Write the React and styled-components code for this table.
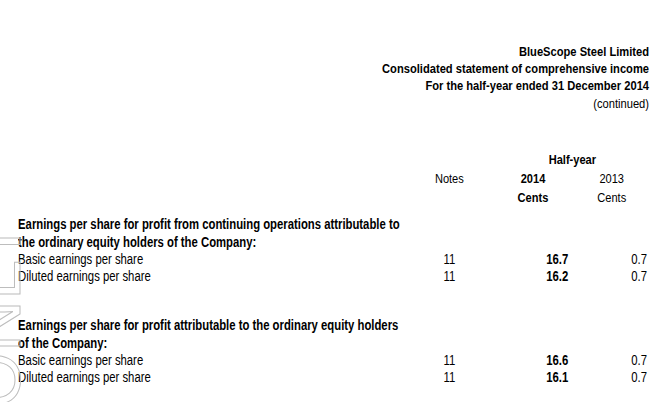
import React from 'react';
import styled, { createGlobalStyle } from 'styled-components';

const GlobalStyle = createGlobalStyle`
html, body {
    margin: 0;
    padding: 0;
    background: #fff;
    overflow: hidden;
}
`;

const Frame = styled.div`
position: relative;
width: 672px;
height: 402px;
overflow: hidden;
`;

// the pdf uses a narrow arial, so the sheet is squeezed horizontally
const Sheet = styled.div`
width: 819.5px;
padding-top: 42.7px;
transform: scaleX(0.82);
transform-origin: 0 0;
font-family: "Liberation Sans", Arial, sans-serif;
color: #000;
`;

const Title = styled.div`
text-align: right;
padding-right: 28px;
font-size: 13.6px;
line-height: 17.3px;
font-weight: ${props => props.$plain ? 400 : 700};
`;

const ColumnHead = styled.div`
margin-top: 37.9px;
font-size: 13.5px;
line-height: 19px;
`;

const Row = styled.div`
display: flex;
padding-left: 22px;
`;

const Label = styled.div`
width: 496px;
font-weight: ${props => props.$bold ? 700 : 400};
`;

const Note = styled.div`
width: 60px;
text-align: center;
`;

const Amount = styled.div`
width: 86px;
margin-left: ${props => props.$gap}px;
text-align: ${props => props.$align || 'right'};
font-weight: ${props => props.$bold ? 700 : 400};
`;

const Span = styled.div`
width: 182px;
margin-left: 29px;
text-align: center;
font-weight: 700;
`;

const Section = styled.div`
margin-top: ${props => props.$top}px;
font-size: 13.8px;
line-height: 17.3px;
`;

const Watermark = styled.svg`
position: absolute;
left: 0;
top: 0;
pointer-events: none;
`;

const sections = [
    {
        top: 9.7,
        heading: ['Earnings per share for profit from continuing operations attributable to', 'the ordinary equity holders of the Company:'],
        rows: [
            { label: 'Basic earnings per share', note: '11', current: '16.7', prior: '0.7' },
            { label: 'Diluted earnings per share', note: '11', current: '16.2', prior: '0.7' },
        ],
    },
    {
        top: 31.8,
        heading: ['Earnings per share for profit attributable to the ordinary equity holders', 'of the Company:'],
        rows: [
            { label: 'Basic earnings per share', note: '11', current: '16.6', prior: '0.7' },
            { label: 'Diluted earnings per share', note: '11', current: '16.1', prior: '0.7' },
        ],
    },
];

function EpsSection({ section }) {
    return (
        <Section $top={section.top}>
            {section.heading.map(line => (
                <Row key={line}><Label $bold>{line}</Label></Row>
            ))}
            {section.rows.map(row => (
                <Row key={row.label}>
                    <Label>{row.label}</Label>
                    <Note>{row.note}</Note>
                    <Amount $gap={29} $bold>{row.current}</Amount>
                    <Amount $gap={10}>{row.prior}</Amount>
                </Row>
            ))}
        </Section>
    );
}

function App() {
    return (
        <Frame>
            <GlobalStyle />
            <Sheet>
                <Title>BlueScope Steel Limited</Title>
                <Title>Consolidated statement of comprehensive income</Title>
                <Title>For the half-year ended 31 December 2014</Title>
                <Title $plain>(continued)</Title>

                <ColumnHead>
                    <Row>
                        <Label />
                        <Note />
                        <Span>Half-year</Span>
                    </Row>
                    <Row>
                        <Label />
                        <Note>Notes</Note>
                        <Amount $gap={29} $align="center" $bold>2014</Amount>
                        <Amount $gap={10} $align="center">2013</Amount>
                    </Row>
                    <Row>
                        <Label />
                        <Note />
                        <Amount $gap={29} $align="center" $bold>Cents</Amount>
                        <Amount $gap={10} $align="center">Cents</Amount>
                    </Row>
                </ColumnHead>

                {sections.map((section, i) => <EpsSection key={i} section={section} />)}
            </Sheet>

            <Watermark width="40" height="402" viewBox="0 0 40 402">
                <text
                    transform="translate(20 408) rotate(-90)"
                    fontFamily="Liberation Sans, Arial, sans-serif"
                    fontSize="72"
                    fill="none"
                    stroke="#bdbdbd"
                    strokeWidth="1"
                >ONLY</text>
            </Watermark>
        </Frame>
    );
}

export default App;
